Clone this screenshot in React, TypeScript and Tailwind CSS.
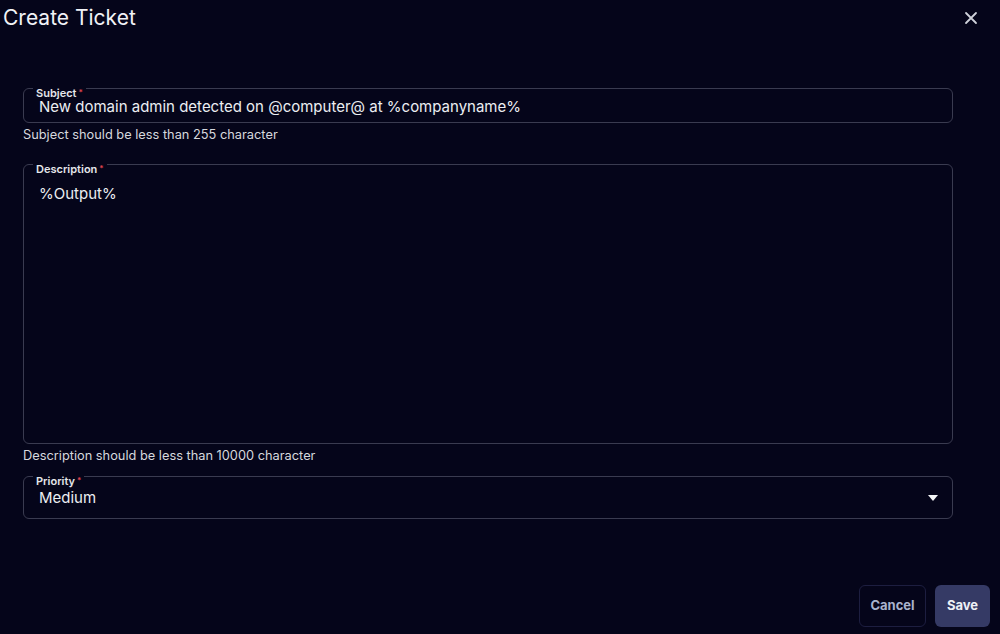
import React from "react";

const font = { fontFamily: "Inter, 'Noto Sans', sans-serif" };

function FieldLabel({ text }: { text: string }) {
  return (
    <span className="absolute left-[9px] top-[-1px] bg-[#05051a] px-[3px] text-[11px] leading-[10px] font-semibold text-[#e5e7eb]">
      {text}
      <span className="ml-[2px] align-top text-[8px] leading-[8px] text-[#e0444f]">*</span>
    </span>
  );
}

export default function App() {
  return (
    <div className="flex h-[634px] w-full flex-col bg-[#05051a] text-[#e5e7eb]" style={font}>
      {/* Header */}
      <div className="flex items-center justify-between pl-[3px] pr-[22px] pt-[4px]">
        <h1 className="text-[21px] leading-[28px] font-normal text-[#f1f2f6]">Create Ticket</h1>
        <button className="text-[#cfd2da]">
          <svg width="14" height="14" viewBox="0 0 14 14" fill="none" stroke="currentColor" strokeWidth="1.8" strokeLinecap="round">
            <path d="M2 2 L12 12 M12 2 L2 12" />
          </svg>
        </button>
      </div>

      {/* Form */}
      <div className="mt-[56px] flex flex-col pl-[23px] pr-[47px]">
        <div className="relative flex h-[35px] items-center rounded-[6px] border border-[#3a3b50] px-[15px] pt-[3px]">
          <FieldLabel text="Subject" />
          <span className="text-[15px] leading-[16px] text-[#eceef2]">
            New domain admin detected on @computer@ at %companyname%
          </span>
        </div>
        <p className="mt-[4px] text-[12.8px] leading-[16px] text-[#d6d8de]">Subject should be less than 255 character</p>

        <div className="relative mt-[21px] h-[280px] rounded-[6px] border border-[#3a3b50] px-[15px] pt-[16px]">
          <FieldLabel text="Description" />
          <span className="text-[15px] leading-[18px] text-[#eceef2]">%Output%</span>
        </div>
        <p className="mt-[4px] text-[12.8px] leading-[16px] text-[#d6d8de]">Description should be less than 10000 character</p>

        <div className="relative mt-[12px] flex h-[43px] items-center justify-between rounded-[6px] border border-[#3a3b50] pl-[15px] pr-[14px] pt-[1px]">
          <FieldLabel text="Priority" />
          <span className="text-[15px] leading-[18px] text-[#eceef2]">Medium</span>
          <svg width="10" height="6" viewBox="0 0 10 6" fill="#f5f6f8">
            <path d="M0 0 H10 L5 6 Z" />
          </svg>
        </div>
      </div>

      {/* Footer */}
      <div className="mt-auto flex justify-end gap-[9px] pb-[7px] pr-[10px]">
        <button className="h-[42px] w-[67px] rounded-[6px] border border-[#1d1e40] text-[13px] font-bold text-[#a9b3cd]">
          Cancel
        </button>
        <button className="h-[42px] w-[55px] rounded-[6px] bg-[#353a65] text-[13px] font-bold text-[#eef0f6]">
          Save
        </button>
      </div>
    </div>
  );
}
